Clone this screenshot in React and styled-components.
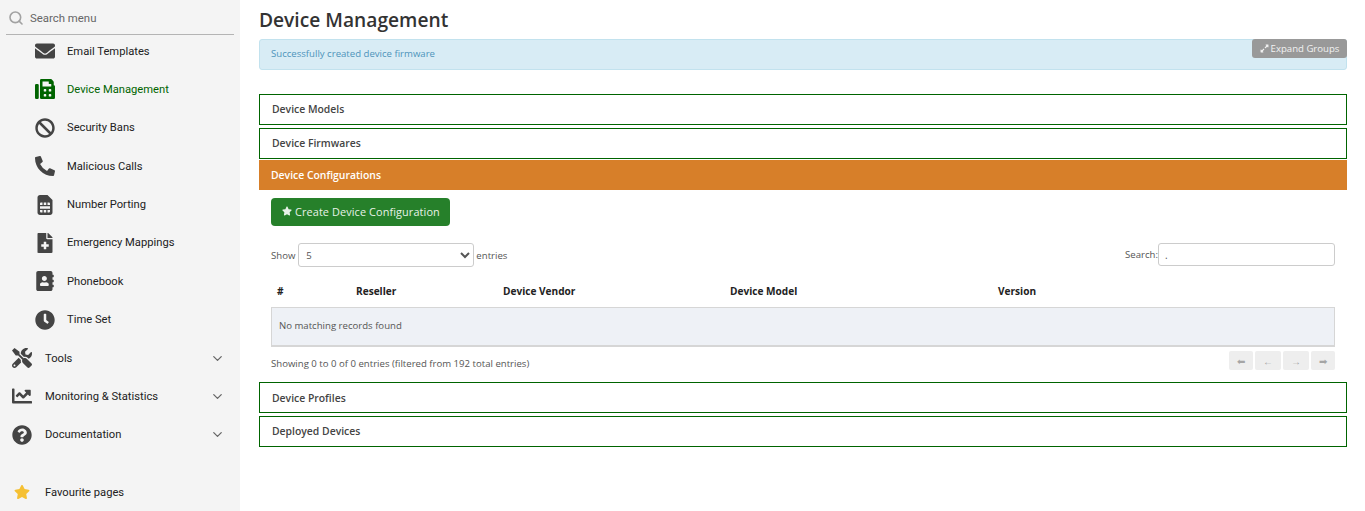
import React from 'react';
import styled, { createGlobalStyle } from 'styled-components';
import {
  FaEnvelope, FaFax, FaBan, FaPhoneAlt, FaSimCard, FaFileMedical, FaAddressBook,
  FaClock, FaTools, FaChartLine, FaQuestionCircle, FaStar, FaExpandAlt,
} from 'react-icons/fa';
import { LuSearch, LuChevronDown } from 'react-icons/lu';

const GlobalStyle = createGlobalStyle`
  html, body {
    margin: 0;
    padding: 0;
    height: 100%;
    overflow: hidden;
    background: #fff;
  }
  * { box-sizing: border-box; }
`;

const Page = styled.div`
  display: flex;
  width: 1365px;
  height: 511px;
  overflow: hidden;
`;

const Sidebar = styled.aside`
  width: 240px;
  flex: none;
  background: #f4f4f4;
  font-family: Roboto, sans-serif;
  font-size: 11.2px;
  color: #222;
`;

const SearchBox = styled.div`
  display: flex;
  align-items: center;
  gap: 6px;
  height: 35px;
  margin: 0 6px;
  padding: 2px 0 0 2px;
  border-bottom: 1px solid #b4b4b4;
  color: #666;
  font-size: 11.4px;
  svg { color: #a2a2a2; flex: none; }
`;

const SubMenu = styled.div`
  margin-top: -3.2px;
`;

const SubRow = styled.div`
  display: flex;
  align-items: center;
  height: 38.4px;
  padding-left: 34px;
  color: ${(p) => (p.$active ? '#006400' : '#222')};
`;

const TopRow = styled.div`
  display: flex;
  align-items: center;
  height: 38.3px;
  padding: 0 15px 0 11px;
  margin-top: ${(p) => p.$gap || 0}px;
`;

const IconSlot = styled.span`
  display: flex;
  align-items: center;
  justify-content: center;
  flex: none;
  width: ${(p) => p.$w}px;
  margin-right: ${(p) => p.$mr}px;
  color: ${(p) => p.$color || '#444'};
`;

const Label = styled.span`
  flex: 1;
`;

const Chevron = styled(LuChevronDown)`
  color: #666;
  flex: none;
`;

const Main = styled.main`
  flex: 1;
  padding: 0 18px 0 19px;
  font-family: "Open Sans", sans-serif;
  font-size: 11px;
  color: #444;
  position: relative;
`;

const Title = styled.h1`
  margin: 0;
  height: 39px;
  padding-top: 6px;
  font-size: 19.2px;
  line-height: 28px;
  font-weight: 600;
  color: #333;
`;

const Alert = styled.div`
  height: 31px;
  margin-bottom: 24px;
  padding: 0 0 3px 11px;
  display: flex;
  align-items: center;
  font-size: 9.6px;
  color: #4e94bb;
  background: #d8ecf5;
  border: 1px solid #c2e2ee;
  border-radius: 3px;
`;

const ExpandButton = styled.button`
  position: absolute;
  top: 39px;
  right: 18px;
  width: 95px;
  height: 19px;
  display: flex;
  align-items: center;
  justify-content: center;
  gap: 2px;
  padding: 0;
  border: 0;
  border-radius: 3px;
  background: #999;
  color: #f2f2f2;
  font-family: inherit;
  font-size: 9.6px;
`;

const Panel = styled.div`
  height: 31px;
  margin-bottom: ${(p) => p.$mb ?? 3}px;
  padding: 0 0 ${(p) => p.$pb ?? 2}px 12px;
  display: flex;
  align-items: center;
  font-size: 10.4px;
  font-weight: 600;
  color: #444;
  border: 1px solid #006400;
`;

const OpenPanel = styled.div`
  height: 30px;
  padding-left: 12px;
  display: flex;
  align-items: center;
  font-size: 10.4px;
  font-weight: 600;
  color: #fff;
  background: #d77f29;
`;

const PanelBody = styled.div`
  padding: 8px 12px 0;
`;

const CreateButton = styled.button`
  display: flex;
  align-items: center;
  gap: 3px;
  width: 179px;
  height: 28px;
  padding: 0 0 2px 11px;
  border: 0;
  border-radius: 4px;
  background: #26802a;
  color: #e8f2e8;
  font-family: inherit;
  font-size: 10.9px;
  letter-spacing: 0.1px;
`;

const Controls = styled.div`
  display: flex;
  justify-content: space-between;
  align-items: flex-start;
  height: 24px;
  margin-top: 17px;
  font-size: 9.6px;
  color: #555;
`;

const ControlGroup = styled.label`
  display: flex;
  align-items: center;
  gap: ${(p) => p.$gap ?? 3}px;
`;

const EntriesSelect = styled.select`
  width: 176px;
  height: 24px;
  margin-right: -1px;
  padding: 0 0 0 3px;
  border: 1px solid #ccc;
  border-radius: 3px;
  background: #fff;
  color: #555;
  font-family: inherit;
  font-size: 9.6px;
`;

const SearchInput = styled.input`
  width: 177px;
  height: 23px;
  padding: 0 6px;
  border: 1px solid #ccc;
  border-radius: 3px;
  font-family: inherit;
  font-size: 10px;
  color: #555;
`;

const Table = styled.table`
  width: 100%;
  margin-top: 10px;
  border-collapse: collapse;
  table-layout: fixed;
`;

const Th = styled.th`
  width: ${(p) => p.$w};
  height: 30px;
  padding: 0 0 2px 5.5px;
  text-align: left;
  font-size: 10.1px;
  font-weight: 700;
  color: #222;
`;

const EmptyCell = styled.td`
  height: 39px;
  padding: 0 0 2px 7px;
  font-size: 9.6px;
  color: #555;
  background: #eef1f6;
  border: 1px solid #d6d6d6;
  border-width: 1px 1px 2px 1px;
`;

const Footer = styled.div`
  display: flex;
  justify-content: space-between;
  height: 35px;
  padding-top: 4px;
  font-size: 9.6px;
  color: #555;
`;

const FooterText = styled.span`
  padding-top: 6px;
`;

const Pager = styled.div`
  display: flex;
  gap: 2px;
`;

const PagerButton = styled.span`
  display: flex;
  align-items: center;
  justify-content: center;
  width: ${(p) => p.$w}px;
  height: 19px;
  border-radius: 2px;
  background: #eee;
  color: #a5a5a5;
  font-size: 10px;
`;

const subItems = [
  { label: 'Email Templates', icon: <FaEnvelope size={20} /> },
  { label: 'Device Management', icon: <FaFax size={20} color="#006400" />, active: true },
  { label: 'Security Bans', icon: <FaBan size={20} /> },
  { label: 'Malicious Calls', icon: <FaPhoneAlt size={20} /> },
  { label: 'Number Porting', icon: <FaSimCard size={20} /> },
  { label: 'Emergency Mappings', icon: <FaFileMedical size={20} /> },
  { label: 'Phonebook', icon: <FaAddressBook size={20} /> },
  { label: 'Time Set', icon: <FaClock size={20} /> },
];

const topItems = [
  { label: 'Tools', icon: <FaTools size={20} /> },
  { label: 'Monitoring & Statistics', icon: <FaChartLine size={20} /> },
  { label: 'Documentation', icon: <FaQuestionCircle size={20} /> },
];

const columns = [
  { label: '#', w: '79px' },
  { label: 'Reseller', w: '147px' },
  { label: 'Device Vendor', w: '227px' },
  { label: 'Device Model', w: '268px' },
  { label: 'Version', w: 'auto' },
];

const pagerItems = [
  { glyph: '⬅', w: 24 },
  { glyph: '←', w: 26 },
  { glyph: '→', w: 26 },
  { glyph: '➡', w: 24 },
];

export default function App() {
  return (
    <Page>
      <GlobalStyle />
      <Sidebar>
        <SearchBox>
          <LuSearch size={16} strokeWidth={2.4} />
          <span>Search menu</span>
        </SearchBox>
        <SubMenu>
          {subItems.map((item) => (
            <SubRow key={item.label} $active={item.active}>
              <IconSlot $w={22} $mr={11}>{item.icon}</IconSlot>
              <span>{item.label}</span>
            </SubRow>
          ))}
        </SubMenu>
        {topItems.map((item) => (
          <TopRow key={item.label}>
            <IconSlot $w={22} $mr={12}>{item.icon}</IconSlot>
            <Label>{item.label}</Label>
            <Chevron size={15} />
          </TopRow>
        ))}
        <TopRow $gap={19.5}>
          <IconSlot $w={22} $mr={12} $color="#f5c033"><FaStar size={16} /></IconSlot>
          <Label>Favourite pages</Label>
        </TopRow>
      </Sidebar>

      <Main>
        <Title>Device Management</Title>
        <Alert>Successfully created device firmware</Alert>
        <ExpandButton><FaExpandAlt size={9} /> Expand Groups</ExpandButton>

        <Panel>Device Models</Panel>
        <Panel $mb={1}>Device Firmwares</Panel>
        <OpenPanel>Device Configurations</OpenPanel>
        <PanelBody>
          <CreateButton><FaStar size={10} /> Create Device Configuration</CreateButton>
          <Controls>
            <ControlGroup>
              Show
              <EntriesSelect defaultValue="5">
                <option value="5">5</option>
                <option value="10">10</option>
                <option value="25">25</option>
              </EntriesSelect>
              entries
            </ControlGroup>
            <ControlGroup $gap={0}>
              Search:
              <SearchInput defaultValue="." />
            </ControlGroup>
          </Controls>
          <Table>
            <thead>
              <tr>
                {columns.map((col) => (
                  <Th key={col.label} $w={col.w}>{col.label}</Th>
                ))}
              </tr>
            </thead>
            <tbody>
              <tr>
                <EmptyCell colSpan={5}>No matching records found</EmptyCell>
              </tr>
            </tbody>
          </Table>
          <Footer>
            <FooterText>Showing 0 to 0 of 0 entries (filtered from 192 total entries)</FooterText>
            <Pager>
              {pagerItems.map((p) => (
                <PagerButton key={p.glyph} $w={p.w}>{p.glyph}</PagerButton>
              ))}
            </Pager>
          </Footer>
        </PanelBody>
        <Panel $pb={0}>Device Profiles</Panel>
        <Panel>Deployed Devices</Panel>
      </Main>
    </Page>
  );
}
